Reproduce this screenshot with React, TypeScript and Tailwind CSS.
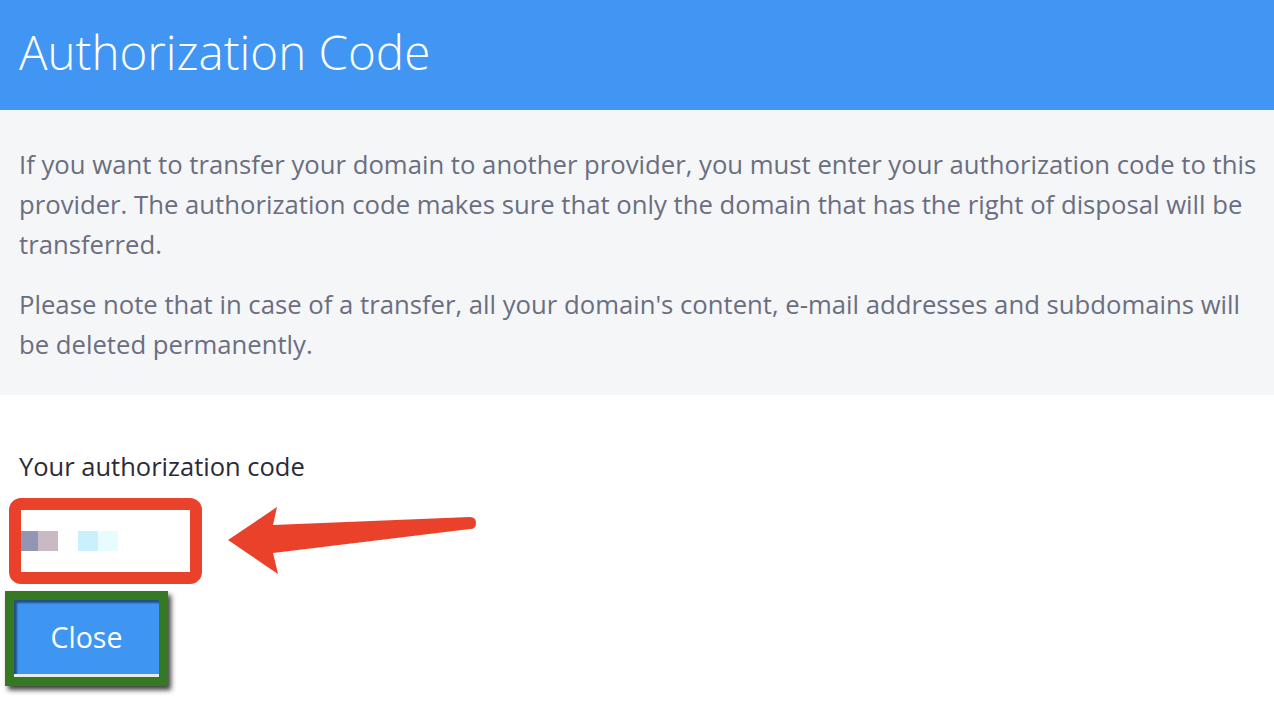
export default function App() {
  return (
    <div className="w-[1274px] h-[712px] bg-white overflow-hidden font-['Open_Sans','Noto_Sans',sans-serif]">
      <header className="h-[110px] bg-[#4196f3] px-[19px] flex items-center">
        <h1 className="text-[47.5px] font-light text-white leading-none -mt-[7px]">
          Authorization Code
        </h1>
      </header>

      <section className="bg-[#f5f6f8] h-[285px] pl-[19px] pt-[35px] text-[25.7px] leading-[40px] text-[#6b6e80] whitespace-nowrap">
        <p>
          If you want to transfer your domain to another provider, you must enter your authorization code to this
          <br />
          provider. The authorization code makes sure that only the domain that has the right of disposal will be
          <br />
          transferred.
        </p>
        <p className="mt-[20px]">
          Please note that in case of a transfer, all your domain's content, e-mail addresses and subdomains will
          <br />
          be deleted permanently.
        </p>
      </section>

      <section className="relative px-[19px] pt-[56px]">
        <label className="block text-[25.5px] leading-[30px] text-[#2b2b38] whitespace-nowrap">Your authorization code</label>

        {/* annotated input */}
        <div className="mt-[17px] -ml-[10px] w-[193px] h-[86px] border-[12px] border-[#e9412a] rounded-[12px] bg-white flex items-center">
          <div className="flex">
            <span className="w-[17px] h-[20px] bg-[#9296b3]" />
            <span className="w-[20px] h-[20px] bg-[#c8b9c3]" />
            <span className="w-[20px] h-[20px]" />
            <span className="w-[20px] h-[20px] bg-[#c9f0fc]" />
            <span className="w-[20px] h-[20px] bg-[#e6fcfe]" />
          </div>
        </div>

        <svg className="absolute left-[220px] top-[100px]" width="270" height="80" viewBox="0 0 270 80">
          <path
            d="M8 45 L57 12 L53 30 L250 22 Q256 22 256 28 Q256 34 250 34 L53 58 L58 79 Z"
            fill="#e9412a"
          />
        </svg>

        {/* annotated button */}
        <div className="mt-[7px] -ml-[14px] w-[163px] h-[95px] border-[9px] border-[#357a22] shadow-[3px_4px_5px_rgba(0,0,0,0.75)]">
          <button className="w-full h-full bg-[#3f95f2] text-white text-[28.5px] shadow-[inset_3px_3px_2px_rgba(0,0,0,0.45)] border-b-[3px] border-[#e8eaee]">
            Close
          </button>
        </div>
      </section>
    </div>
  );
}
